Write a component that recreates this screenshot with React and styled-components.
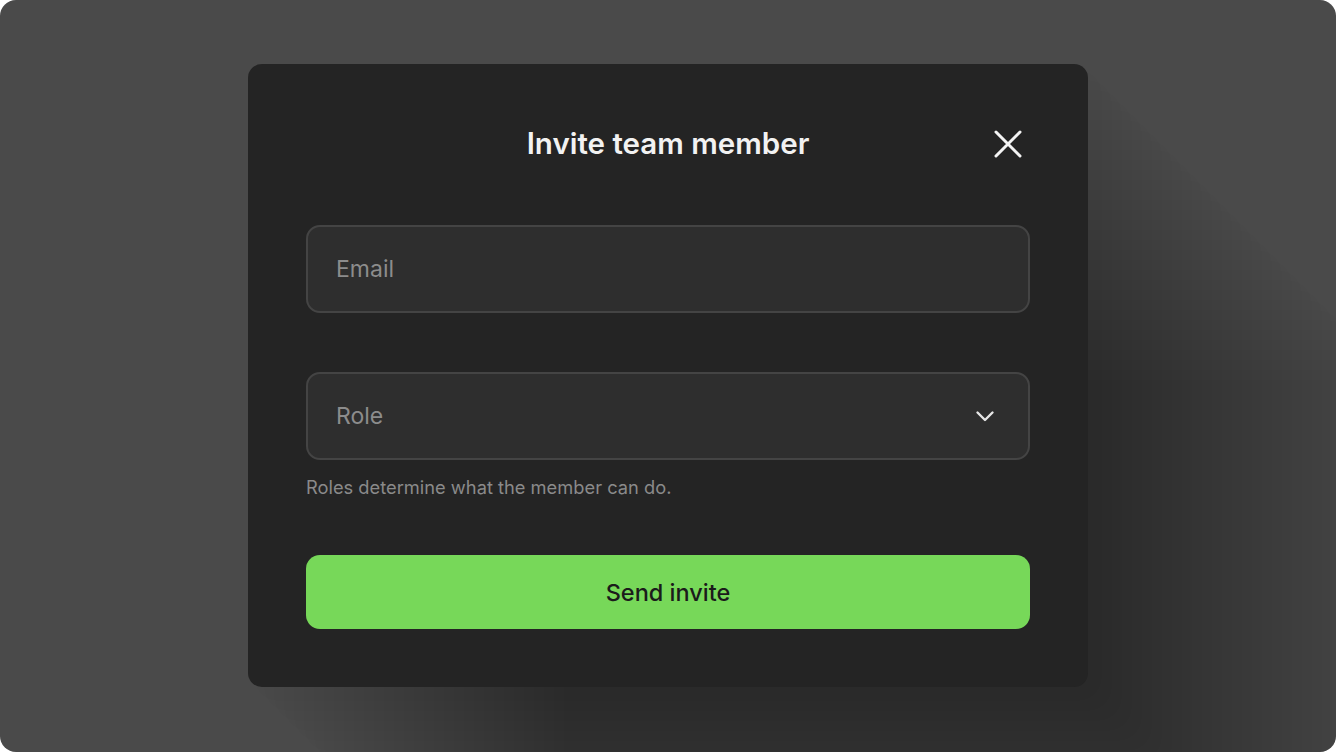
import styled, { createGlobalStyle } from "styled-components";

const GlobalStyle = createGlobalStyle`
    html, body {
        margin: 0;
        padding: 0;
        background: #ffffff;
    }
    * {
        box-sizing: border-box;
    }
`;

// long diagonal shadow cast by the dialog
const longShadow = Array.from({ length: 32 }, (_, i) => {
    const d = (i + 1) * 10;
    return `${d}px ${d}px 20px rgba(0, 0, 0, 0.0125)`;
}).join(", ");

const Frame = styled.div`
    width: 1336px;
    height: 752px;
    border-radius: 16px;
    background: #4a4a4a;
    overflow: hidden;
    display: flex;
    justify-content: center;
    align-items: flex-start;
    padding-top: 64px;
    font-family: Inter, "Noto Sans", sans-serif;
`;

const Dialog = styled.div`
    width: 840px;
    background: #242424;
    border-radius: 14px;
    padding: 58px;
    display: flex;
    flex-direction: column;
    box-shadow: ${longShadow};
`;

const Header = styled.div`
    display: grid;
    grid-template-columns: 44px 1fr 44px;
    align-items: center;
    height: 44px;
    margin-bottom: 59px;
`;

const Title = styled.h2`
    grid-column: 2;
    margin: -2px 0 0;
    text-align: center;
    color: #f2f2f2;
    font-size: 29.5px;
    font-weight: 600;
`;

const CloseButton = styled.button`
    grid-column: 3;
    width: 44px;
    height: 44px;
    padding: 0;
    border: none;
    background: none;
    display: flex;
    align-items: center;
    justify-content: center;
    color: #f4f4f4;
    cursor: pointer;
`;

const Field = styled.div`
    height: 88px;
    border: 2px solid #444444;
    border-radius: 14px;
    background: #2e2e2e;
    display: flex;
    align-items: center;
    justify-content: space-between;
    padding: 0 33px 0 28px;
    margin-bottom: ${({ $gap }) => $gap || 0}px;
`;

const Placeholder = styled.span`
    color: #8c8c8c;
    font-size: 23px;
    font-weight: 400;
`;

const Hint = styled.p`
    margin: 15px 0 56px;
    color: #8a8a8a;
    font-size: 18.3px;
    line-height: 24px;
`;

const SendButton = styled.button`
    height: 74px;
    border: none;
    border-radius: 14px;
    background: #77d859;
    color: #1b1b1b;
    font-family: Inter, "Noto Sans", sans-serif;
    font-size: 23.5px;
    font-weight: 500;
    cursor: pointer;
`;

function CloseIcon() {
    return (
        <svg width="28" height="28" viewBox="0 0 28 28" fill="none">
            <path d="M2 2L26 26M26 2L2 26" stroke="currentColor" strokeWidth="3" strokeLinecap="round" />
        </svg>
    );
}

function Chevron() {
    return (
        <svg width="20" height="12" viewBox="0 0 20 12" fill="none">
            <path d="M2.5 2.5L10 10L17.5 2.5" stroke="#e6e6e6" strokeWidth="2.4" strokeLinecap="round" strokeLinejoin="round" />
        </svg>
    );
}

export default function App() {
    return (
        <>
            <GlobalStyle />
            <Frame>
                <Dialog>
                    <Header>
                        <Title>Invite team member</Title>
                        <CloseButton aria-label="Close">
                            <CloseIcon />
                        </CloseButton>
                    </Header>
                    <Field $gap={59}>
                        <Placeholder>Email</Placeholder>
                    </Field>
                    <Field>
                        <Placeholder>Role</Placeholder>
                        <Chevron />
                    </Field>
                    <Hint>Roles determine what the member can do.</Hint>
                    <SendButton>Send invite</SendButton>
                </Dialog>
            </Frame>
        </>
    );
}
